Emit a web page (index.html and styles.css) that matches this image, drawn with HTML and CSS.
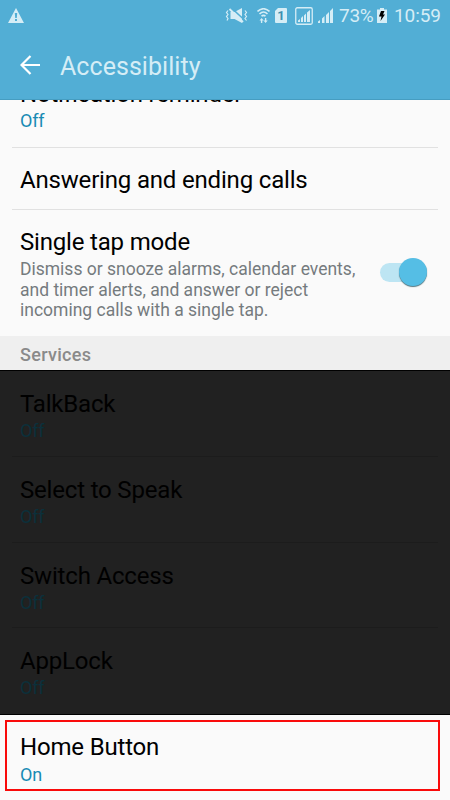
FILE: index.html
```html
<!DOCTYPE html>
<html lang="en">
<head>
<meta charset="utf-8">
<title>Accessibility</title>
<link rel="stylesheet" href="styles.css">
</head>
<body>
<div class="screen">
  <header class="header">
    <div class="statusbar">
      <svg class="warning" width="16" height="15" viewBox="0 0 16 15"><path d="M8 0L16 15H0Z" fill="#d5edf6"/><path d="M6.800 5h2.400l-.4 5H7.200zM7 11h2v2H7z" fill="#52aed5"/></svg>
      <svg class="vibrate" width="23" height="15" viewBox="0 0 23 15"><path d="M5.500 4h4L17 0v15l-7.500-4h-4z" fill="#d5edf6"/><path d="M7 .5l13 12" stroke="#52aed5" stroke-width="1.600"/><path d="M4.500 1l13.500 13" fill="none" stroke="#d5edf6" stroke-width="1.800"/><path d="M3 2.500L1.500 4.500 3 6.500 1.500 8.500 3 10.500 2 12.500M20 2.500l1.500 2-1.500 2 1.500 2-1.500 2 1.500 2" fill="none" stroke="#d5edf6" stroke-width="1.200"/></svg>
      <svg class="wifi" width="13" height="15" viewBox="0 0 13 15"><path d="M.5 3.500Q6.500-2 12.500 3.500M2.500 6q4-4 8 0M4.500 8.300q2-2 4 0" fill="none" stroke="#d5edf6" stroke-width="1.600"/><path d="M2.500 12.500h1.400V15h1.400v-2.500h1.400L4.600 10zM6.500 12.500h1.400V10h1.400v2.500h1.400L8.600 15z" fill="#d5edf6"/></svg>
      <span class="sim">1</span>
      <svg class="boxed" width="18" height="18" viewBox="0 0 18 18"><rect x=".75" y=".75" width="16.500" height="16.500" rx="1.500" fill="none" stroke="#d5edf6" stroke-width="1.300"/><path d="M3 13.500l2-1.500v3H3zM6 11l2-2v6H6zM9 8.500l2-2V15H9zM12 5.500l3-2.500v12h-3z" fill="#d5edf6"/></svg>
      <svg class="signal" width="16" height="15" viewBox="0 0 16 15"><path d="M0 13.500l2-1.500v3H0zM4 10.500l2.500-2.500v7H4zM8 7l3-3v11H8zM12 3l3-3v15h-3z" fill="#d5edf6"/></svg>
      <span class="percent">73%</span>
      <svg class="battery" width="10" height="15" viewBox="0 0 10 15"><path d="M3 0h4v1.500h3V15H0V1.500h3z" fill="#d5edf6"/><path d="M4 3h3.500L6 6.500h2L3.500 13l1-4.500H2z" fill="#000"/></svg>
      <span class="clock">10:59</span>
    </div>
    <div class="toolbar">
      <svg class="back" width="20" height="20" viewBox="0 0 20 20"><path d="M20 10H1.500M10.500 1L1.500 10l9 9" fill="none" stroke="#fff" stroke-width="2.200"/></svg>
      <h1>Accessibility</h1>
    </div>
  </header>
  <main>
    <section class="row reminder"><h2>Notification reminder</h2><p class="state">Off</p></section>
    <section class="row calls"><h2>Answering and ending calls</h2></section>
    <section class="row tap">
      <div><h2>Single tap mode</h2><p class="detail">Dismiss or snooze alarms, calendar events,<br>and timer alerts, and answer or reject<br>incoming calls with a single tap.</p></div>
      <div class="switch"><i></i></div>
    </section>
    <div class="services">Services</div>
    <div class="dimmed">
      <section class="row"><h2>TalkBack</h2><p class="state">Off</p></section>
      <section class="row"><h2>Select to Speak</h2><p class="state">Off</p></section>
      <section class="row"><h2>Switch Access</h2><p class="state">Off</p></section>
      <section class="row"><h2>AppLock</h2><p class="state">Off</p></section>
    </div>
    <section class="home"><h2>Home Button</h2><p class="state">On</p></section>
  </main>
</div>
</body>
</html>
```
FILE: styles.css
```css
* { box-sizing: border-box; }
body { margin: 0; font-family: Roboto, sans-serif; background: #fafafa; }
h1, h2, p { margin: 0; font-weight: 400; white-space: nowrap; }
svg { display: block; flex: none; }
.screen { width: 450px; height: 800px; overflow: hidden; }
.header { height: 100px; background: #52aed5; border-bottom: 1px solid #469dc1; }
.statusbar { display: flex; align-items: center; height: 31px; padding-left: 8px; color: #d5edf6; font-size: 19px; white-space: nowrap; }
.vibrate { margin-left: 201px; }
.wifi { margin-left: 9px; }
.sim { width: 12px; height: 15px; margin-left: 5px; background: #d5edf6; border-radius: 1px; clip-path: polygon(3px 0, 100% 0, 100% 100%, 0 100%, 0 3px); color: #3c8faf; font-size: 13px; font-weight: 700; line-height: 15px; text-align: center; }
.boxed { margin-left: 8px; }
.signal { margin-left: 5px; }
.percent { width: 35px; margin-left: 5px; letter-spacing: -.3px; }
.battery { margin-left: 3px; }
.clock { margin-left: 7px; letter-spacing: -.1px; }
.toolbar { display: flex; align-items: center; height: 69px; padding-left: 20px; }
.back { margin-top: -1px; }
h1 { margin: 2px 0 0 20px; color: #d5edf6; font-size: 25px; line-height: 30px; letter-spacing: .05px; }
h2 { color: #000; font-size: 24px; line-height: 28px; letter-spacing: -.18px; }
.state { margin-top: 3px; color: #198bb4; font-size: 18px; line-height: 22px; letter-spacing: -.2px; }
.row { margin: 0 12px; padding: 0 8px; border-bottom: 1px solid #e1e1e1; }
.reminder { height: 48px; overflow: hidden; }
.reminder h2 { margin-top: -20px; }
.reminder .state { margin-top: 2px; }
.calls { height: 62px; padding-top: 18px; }
.tap { display: flex; height: 126px; padding-top: 18px; border: 0; }
.detail { margin-top: 3px; color: #757b7e; font-size: 17.5px; line-height: 20.5px; }
.switch { display: flex; justify-content: flex-end; align-items: center; width: 47px; height: 19px; margin: 35px 3px 0 auto; border-radius: 10px; background: #bde5f3; }
.switch i { flex: none; width: 28px; height: 28px; margin-top: -1px; border-radius: 50%; background: #55bee5; box-shadow: 0 1px 1px #52757f; }
.services { height: 34px; padding: 8px 20px 0; background: #efefef; color: #8a8a8a; font-size: 18px; font-weight: 500; line-height: 22px; letter-spacing: .3px; }
.dimmed { height: 345px; background: #212121; border: solid #000; border-width: 1px 0; }
.dimmed .row { height: 86px; padding-top: 19px; border-color: #1c1c1c; }
.dimmed .row + .row { height: 85.7px; }
.dimmed .row:last-child { border: 0; }
.dimmed .state { margin-top: 2px; color: #0b303b; }
.home { width: 435px; height: 71px; margin: 5px 0 0 5px; padding: 11px 13px; border: 2px solid #f90b0b; }
```
